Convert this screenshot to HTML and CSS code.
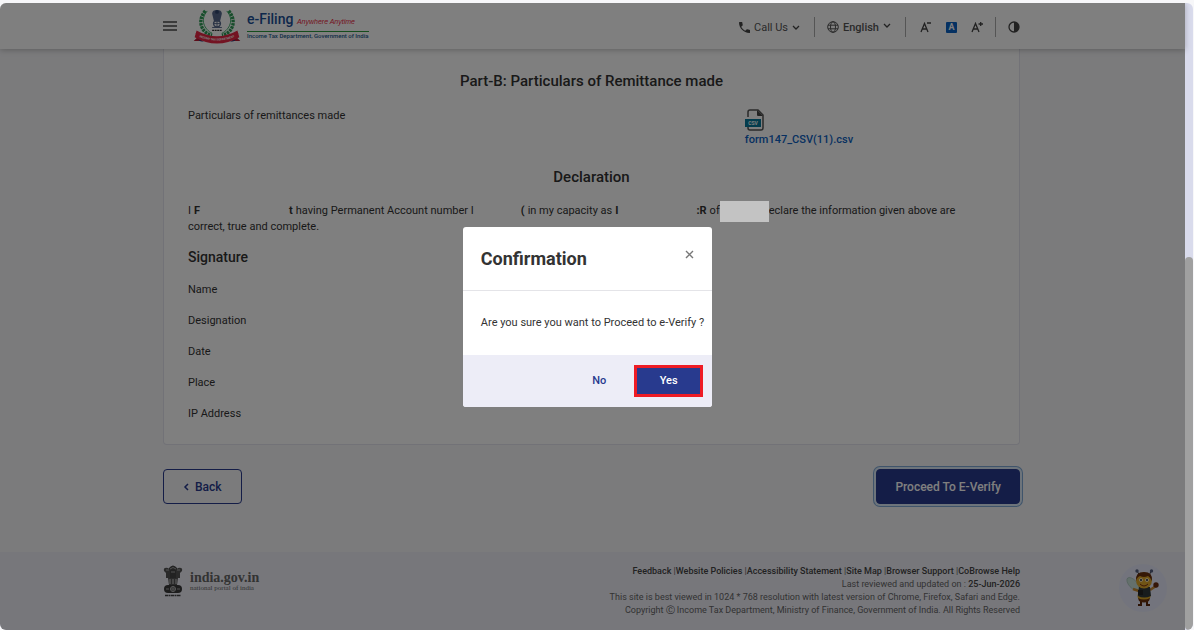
FILE: index.html
```html
<!DOCTYPE html>
<html lang="en">

<head>
    <meta charset="UTF-8">
    <meta name="viewport" content="width=device-width, initial-scale=1.0">
    <title>e-Filing</title>
    <link rel="stylesheet" href="styles.css">
</head>

<body>
    <div class="window">
        <div class="page">
            <header class="topbar">
                <div class="container topbar-inner">
                    <button class="icon-btn menu-btn" aria-label="Menu">
                        <svg width="14" height="10" viewBox="0 0 14 10" stroke="#777" stroke-width="2">
                            <path d="M0 1h14M0 5h14M0 9h14" />
                        </svg>
                    </button>
                    <a href="#" class="brand">
                        <svg class="brand-emblem" width="50" height="35" viewBox="0 0 50 36">
                            <path d="M13 2C4 12 9 25 20 27M37 2C46 12 41 25 30 27" fill="none" stroke="#2f9a56" stroke-width="3.4" stroke-dasharray="2.6 .8" />
                            <path d="M15 2C7 11 12 21 20 25M35 2C43 11 38 21 30 25" fill="none" stroke="#3aa864" stroke-width="1" />
                            <path d="M20 5c0-3 2-4 5-4s5 1 5 4l-1 4h-8zM21 9h8l-1 4h-6z" fill="#57698c" />
                            <circle cx="25" cy="3" r="2" fill="#30476f" />
                            <circle cx="25" cy="15" r="3.5" fill="none" stroke="#57698c" stroke-width="1.5" />
                            <path d="M25 11v8M21 15h8M20 19h10" stroke="#57698c" />
                            <path d="M20 22h10" stroke="#333" stroke-width="1.5" stroke-dasharray="2 .6" />
                            <path d="M1 33l4-4-2-4 7 1v7zM49 33l-4-4 2-4-7 1v7z" fill="#b81a35" />
                            <path d="M6 31l6 3-5-1zM44 31l-6 3 5-1z" fill="#26367a" />
                            <path d="M4 22q21 12 42 0l2 7q-23 13-46 0z" fill="#e62745" />
                            <path id="ribbonLine" d="M5 28q20 9 40 0" fill="none" />
                            <text class="ribbon-text"><textPath href="#ribbonLine" startOffset="50%">INCOME TAX DEPARTMENT</textPath></text>
                        </svg>
                        <span class="brand-text">
                            <span class="brand-title">e-Filing <i>Anywhere Anytime</i></span>
                            <span class="brand-sub">Income Tax Department, Government of India</span>
                        </span>
                    </a>
                    <nav class="tools">
                        <button class="tool call">
                            <svg width="11" height="11" viewBox="3 3 18 18" fill="#444">
                                <path d="M6.6 10.8c1.4 2.8 3.8 5.1 6.6 6.6l2.2-2.2c.3-.3.7-.4 1-.2 1.1.4 2.3.6 3.6.6.6 0 1 .4 1 1V20c0 .6-.4 1-1 1C10.6 21 3 13.4 3 4c0-.6.4-1 1-1h3.5c.6 0 1 .4 1 1 0 1.2.2 2.5.6 3.6.1.3 0 .7-.2 1z" />
                            </svg>
                            Call Us
                            <svg class="chevron" width="8" height="5" viewBox="0 0 8 5"><path d="M1 1l3 3 3-3" /></svg>
                        </button>
                        <button class="tool lang">
                            <svg width="12" height="12" viewBox="0 0 12 12" fill="none" stroke="#555">
                                <circle cx="6" cy="6" r="5.3" />
                                <ellipse cx="6" cy="6" rx="2.5" ry="5.3" />
                                <path d="M1 4.2h10M1 7.8h10" />
                            </svg>
                            English
                            <svg class="chevron raised" width="8" height="5" viewBox="0 0 8 5"><path d="M1 1l3 3 3-3" /></svg>
                        </button>
                        <div class="tool sizes">
                            <button class="icon-btn" aria-label="Decrease text size">
                                <svg width="12" height="12" viewBox="0 0 12 12" fill="none" stroke="#444" stroke-width="1.3">
                                    <path d="M1 11l3.5-8.5L8 11M2.3 8h4.4M7 2h4" />
                                </svg>
                            </button>
                            <button class="icon-btn normal">A</button>
                            <button class="icon-btn" aria-label="Increase text size">
                                <svg width="12" height="12" viewBox="0 0 12 12" fill="none" stroke="#444" stroke-width="1.3">
                                    <path d="M1 11l3.5-8.5L8 11M2.3 8h4.4M7.5 3H12M9.7 1v4" />
                                </svg>
                            </button>
                        </div>
                        <button class="icon-btn" aria-label="Contrast">
                            <svg width="12" height="12" viewBox="0 0 12 12">
                                <circle cx="6" cy="6" r="5" fill="none" stroke="#444" stroke-width="1.3" />
                                <path d="M6 1a5 5 0 0 1 0 10z" fill="#444" />
                            </svg>
                        </button>
                    </nav>
                </div>
            </header>

            <main class="container">
                <section class="card">
                    <h2>Part-B: Particulars of Remittance made</h2>
                    <div class="remittance">
                        <span>Particulars of remittances made</span>
                        <a href="#" class="file">
                            <svg width="20" height="22" viewBox="0 0 20 22">
                                <path d="M3 8V3q0-2 2-2h8l5 5v13q0 2-2 2H5q-2 0-2-2v-2" fill="none" stroke="#555" stroke-width="1.5" />
                                <path d="M12 1l6 6h-5q-1 0-1-1z" fill="#444" />
                                <rect y="10" width="16" height="8" fill="#06799a" />
                                <text class="csv-text" x="8" y="16">CSV</text>
                            </svg>
                            form147_CSV(11).csv
                        </a>
                    </div>
                    <h2>Declaration</h2>
                    <div class="declaration">
                        <div class="line">
                            <span>I</span>
                            <b class="name">F</b>
                            <b>t</b>
                            <span class="pan">having Permanent Account number I</span>
                            <b>(</b>
                            <span>in my capacity as</span>
                            <b class="capacity">I</b>
                            <b>:R</b>
                            <span>of</span>
                            <span class="mask"></span>
                            <span>eclare the information given above are</span>
                        </div>
                        <div>correct, true and complete.</div>
                    </div>
                    <h3>Signature</h3>
                    <ul class="fields">
                        <li>Name</li>
                        <li>Designation</li>
                        <li>Date</li>
                        <li>Place</li>
                        <li>IP Address</li>
                    </ul>
                </section>
                <div class="actions">
                    <button class="btn outline">
                        <svg width="6" height="8" viewBox="0 0 6 8" fill="none" stroke="#283a8e" stroke-width="1.5"><path d="M5 1L2 4l3 3" /></svg>
                        Back
                    </button>
                    <button class="btn primary">Proceed To E-Verify</button>
                </div>
            </main>

            <footer class="footer">
                <div class="container footer-inner">
                    <a href="#" class="portal">
                        <svg width="20" height="32" viewBox="0 0 20 32">
                            <path d="M6 3q4-5 8 0l1 3-2 7H7L5 6z" fill="#444" />
                            <path d="M5 3Q0 2 1 6l2 2v5h4V5zM15 3q5-1 4 3l-2 2v5h-4V5z" fill="#555" />
                            <path d="M7 4q3-3 6 0M8 7h4M3 5h3M14 5h3" stroke="#bbb" fill="none" stroke-width=".8" />
                            <path d="M5 13h10l-1 7H6z" fill="#555" />
                            <path d="M7 14v5M10 14v5M13 14v5" stroke="#ccc" />
                            <rect x="1" y="20" width="18" height="8" rx="4" fill="#3b3b3b" />
                            <circle cx="10" cy="24" r="2.5" fill="none" stroke="#bbb" />
                            <path d="M3 24h3M14 24h3M10 22v4M8 24h4" stroke="#bbb" stroke-width=".8" />
                            <path d="M2 30.5h16" stroke="#444" stroke-width="1.5" stroke-dasharray="3 .5 2 .5" />
                        </svg>
                        <span class="portal-text"><strong>india.gov.in</strong><small>national portal of india</small></span>
                    </a>
                    <div class="legal">
                        <div><a href="#">Feedback</a> |<a href="#">Website Policies</a> |<a href="#">Accessibility Statement</a> |<a href="#">Site Map</a> |<a href="#">Browser Support</a> |<a href="#">CoBrowse Help</a></div>
                        <div>Last reviewed and updated on : <b>25-Jun-2026</b></div>
                        <div>This site is best viewed in 1024 * 768 resolution with latest version of Chrome, Firefox, Safari and Edge.</div>
                        <div>Copyright <b>Ⓒ</b> Income Tax Department, Ministry of Finance, Government of India. All Rights Reserved</div>
                    </div>
                </div>
            </footer>

            <button class="chatbot" aria-label="Chat">
                <svg width="34" height="40" viewBox="0 0 34 40">
                    <ellipse cx="7" cy="16" rx="4" ry="8" transform="rotate(-42 7 16)" fill="#c8e0d8" stroke="#9dbcb0" stroke-width=".6" />
                    <path d="M14 8l-3-5M23 8l2-5" stroke="#444" fill="none" />
                    <circle cx="11" cy="3" r="1.7" fill="#566080" />
                    <circle cx="25.5" cy="3" r="1.7" fill="#566080" />
                    <path d="M13 23l-6-2M24 22l6-4" stroke="#c88a32" stroke-width="2.5" />
                    <circle cx="30" cy="17" r="2.7" fill="#6a2c10" />
                    <path d="M15 32v5h-3M21 32v5h3" stroke="#5b260b" stroke-width="2" fill="none" />
                    <ellipse cx="18" cy="28" rx="6.5" ry="6" fill="#d9a524" />
                    <path d="M12 30q6 3 12 0l-1 3q-5 3-10 0z" fill="#6b310c" />
                    <path d="M13 19h11l1 9q-7 3-13 0z" fill="#30383a" />
                    <rect x="12" y="22" width="5" height="5" fill="#252525" />
                    <circle cx="18" cy="12.5" r="8" fill="#e1a82b" />
                    <path d="M10 13q-1-9 8-9t8 9q-2-4-4-5-4 2-8 0-3 1-4 5z" fill="#6b310c" />
                    <circle cx="15" cy="12" r="1.8" fill="#fff" />
                    <circle cx="21" cy="12" r="1.8" fill="#fff" />
                    <circle cx="15" cy="12" r="1" fill="#222" />
                    <circle cx="21" cy="12" r="1" fill="#222" />
                    <path d="M14 16q4 4 8 0" stroke="#7d3010" fill="none" />
                </svg>
            </button>

            <div class="overlay">
                <div class="modal" role="dialog" aria-labelledby="modalTitle">
                    <div class="modal-header">
                        <h1 id="modalTitle">Confirmation</h1>
                        <button class="icon-btn" aria-label="Close">
                            <svg width="9" height="9" viewBox="0 0 9 9" stroke="#777" stroke-width="1.4"><path d="M1 1l7 7M8 1L1 8" /></svg>
                        </button>
                    </div>
                    <div class="modal-body">Are you sure you want to Proceed to e-Verify ?</div>
                    <div class="modal-footer">
                        <button class="modal-btn">No</button>
                        <button class="modal-btn yes">Yes</button>
                    </div>
                </div>
            </div>
        </div>
        <div class="scrollbar"><div class="thumb"></div></div>
    </div>
</body>

</html>
```
FILE: styles.css
```css
* {
    box-sizing: border-box;
}

body {
    margin: 0;
    padding: 3px 1px 0 0;
    background-color: #f7f7f9;
    font-family: Roboto, sans-serif;
    font-size: 11px;
    line-height: 16px;
    color: #333;
}

h1, h2, h3, p, ul {
    margin: 0;
    padding: 0;
}

a {
    text-decoration: none;
    color: inherit;
}

button {
    font-family: inherit;
    font-size: 11px;
    cursor: pointer;
}

svg {
    display: block;
    flex-shrink: 0;
}

.window {
    display: flex;
    min-height: calc(100vh - 3px);
    border-radius: 6px;
    overflow: hidden;
}

.page {
    position: relative;
    flex: 1;
    display: flex;
    flex-direction: column;
    background-color: #f6f6f9;
}

.container {
    width: 100%;
    max-width: 859px;
    margin: 0 auto;
    padding-right: 2px;
}

/* top bar */
.topbar {
    background-color: #fff;
    box-shadow: 0 1px 6px rgba(0, 0, 0, 0.25);
    z-index: 1;
}

.topbar-inner {
    display: flex;
    align-items: center;
    height: 46px;
}

.icon-btn {
    display: flex;
    align-items: center;
    justify-content: center;
    padding: 0;
    border: none;
    background: none;
}

.brand {
    display: flex;
    align-items: center;
    gap: 5px;
    margin-left: 15px;
}

.brand-text {
    display: flex;
    flex-direction: column;
    padding-bottom: 2px;
}

.brand-title {
    border-bottom: 1px solid #2c9a3c;
    font-size: 14px;
    font-weight: 500;
    line-height: 18px;
    color: #1b4f96;
}

.brand-title i {
    font-family: "Liberation Sans", sans-serif;
    font-size: 7px;
    color: #e81e3c;
}

.brand-sub {
    font-size: 6px;
    font-weight: 500;
    line-height: 8px;
    color: #1c5b8c;
}

.ribbon-text {
    font-size: 3px;
    font-weight: bold;
    text-anchor: middle;
    fill: #fff;
}

.tools {
    display: flex;
    align-items: center;
    margin-left: auto;
    padding-top: 2px;
}

.tool {
    display: flex;
    align-items: center;
    gap: 4px;
    height: 20px;
    margin-right: 12px;
    padding: 0 14px 0 0;
    border: none;
    border-right: 1px solid #aaa;
    background: none;
    color: #555;
}

.lang {
    font-weight: 500;
}

.chevron {
    fill: none;
    stroke: #444;
    stroke-width: 1.3;
}

.raised {
    margin-bottom: 4px;
}

.sizes {
    gap: 14px;
    padding-right: 12px;
    margin-left: 2px;
}

.normal {
    width: 11px;
    height: 11px;
    border-radius: 1px;
    background-color: #0b62c4;
    font-size: 9px;
    font-weight: bold;
    color: #fff;
}

/* form card */
.card {
    padding: 21px 24px 14px;
    border: 1px solid #e4e4ee;
    border-top: none;
    border-radius: 0 0 4px 4px;
    background-color: #fff;
}

h2 {
    font-size: 15px;
    font-weight: 500;
    line-height: 22px;
    text-align: center;
}

.remittance {
    display: grid;
    grid-template-columns: 69% 1fr;
    padding: 16px 0 18px;
}

.file {
    display: flex;
    flex-direction: column;
    gap: 1px;
    padding-top: 1px;
    font-weight: 500;
    color: #0c61c2;
}

.csv-text {
    font-size: 5px;
    font-weight: bold;
    text-anchor: middle;
    fill: #fff;
}

.declaration {
    padding-top: 15px;
}

.line {
    display: flex;
    gap: 3px;
    height: 16px;
    white-space: nowrap;
}

.name {
    margin-right: 86px;
}

.pan {
    margin-right: 44px;
}

.capacity {
    margin-right: 75px;
}

/* sits above the overlay */
.mask {
    z-index: 3;
    width: 49px;
    height: 21px;
    margin: -2px -3px 0;
    background-color: #c3c3c3;
}

h3 {
    padding: 12px 0 8px;
    font-size: 14px;
    font-weight: 500;
    line-height: 20px;
}

.fields {
    list-style: none;
}

.fields li {
    padding: 7px 0 8px;
}

.actions {
    display: flex;
    justify-content: space-between;
    padding: 24px 0 48px;
}

.btn {
    display: flex;
    align-items: center;
    gap: 6px;
    height: 35px;
    padding: 0 18px;
    border: 1px solid #283a8e;
    border-radius: 4px;
    font-size: 12px;
    font-weight: 500;
}

.outline {
    padding: 0 19px;
    background: none;
    color: #283a8e;
}

.primary {
    background-color: #283a8e;
    box-shadow: 0 0 0 2px #dbe9f6, 0 0 0 3px #7fa9d6;
    color: #fff;
}

/* footer */
.footer {
    flex: 1;
    background-color: #eeeef7;
}

.footer-inner {
    display: flex;
    justify-content: space-between;
    align-items: flex-start;
    padding-top: 13px;
    font-size: 9px;
    line-height: 13px;
    color: #666;
}

.portal {
    display: flex;
    align-items: center;
    gap: 7px;
}

.portal-text {
    display: flex;
    flex-direction: column;
    font-family: "Liberation Serif", serif;
}

.portal-text strong {
    font-size: 14px;
}

.portal-text small {
    font-size: 7px;
    line-height: 8px;
}

.legal {
    text-align: right;
}

.legal a, .legal b {
    font-weight: 500;
    color: #444;
}

.chatbot {
    position: absolute;
    right: 18px;
    bottom: 18px;
    display: flex;
    align-items: center;
    justify-content: center;
    width: 48px;
    height: 48px;
    padding: 0;
    border: none;
    border-radius: 50%;
    background-color: #e6e9fa;
}

/* confirmation dialog */
.overlay {
    position: absolute;
    inset: 0;
    z-index: 2;
    display: flex;
    align-items: center;
    justify-content: center;
    padding-right: 10px;
    background-color: rgba(0, 0, 0, 0.5);
}

.modal {
    border-radius: 3px;
    background-color: #fff;
    overflow: hidden;
}

.modal-header {
    display: flex;
    justify-content: space-between;
    align-items: flex-start;
    padding: 18px;
    border-bottom: 1px solid #e4e4e8;
}

.modal-header h1 {
    font-size: 18px;
    font-weight: 700;
    line-height: 27px;
}

.modal-header .icon-btn {
    padding-top: 5px;
}

.modal-body {
    padding: 24px 8px 24px 18px;
}

.modal-footer {
    display: flex;
    justify-content: flex-end;
    gap: 12px;
    padding: 10px 9px;
    background-color: #ededf7;
}

.modal-btn {
    padding: 0 16px;
    border: none;
    background: none;
    font-weight: 500;
    color: #283a8e;
}

.yes {
    width: 69px;
    height: 32px;
    border: 3px solid #ee1c25;
    background-color: #283a8e;
    color: #fff;
}

/* scrollbar */
.scrollbar {
    display: flex;
    flex-direction: column;
    justify-content: flex-end;
    width: 8px;
    background-color: #d9dbec;
}

.thumb {
    height: 59.5%;
    border-radius: 4px;
    background-color: #a0a0a0;
}
```
